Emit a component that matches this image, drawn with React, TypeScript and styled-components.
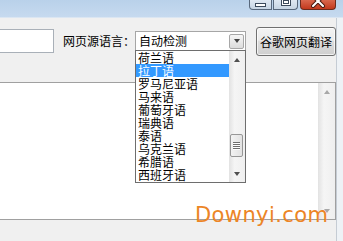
import React from "react";
import styled, { createGlobalStyle } from "styled-components";

const GlobalStyle = createGlobalStyle`
  html, body {
    margin: 0;
    padding: 0;
    background: #f0f0f0;
    overflow: hidden;
  }
  body {
    font-family: "Noto Sans CJK SC", "DejaVu Sans", sans-serif;
    font-size: 12px;
    color: #000;
  }
  * {
    box-sizing: border-box;
  }
`;

const Window = styled.div`
  position: relative;
  width: 343px;
  height: 241px;
  overflow: hidden;
  display: flex;
  flex-direction: column;
  background: #f0f0f0;
`;

const TitleBar = styled.div`
  flex: none;
  height: 18px;
  background: linear-gradient(#b9d1ea, #c6daef);
  border-bottom: 1px solid #dbe6f2;
  display: flex;
  justify-content: flex-end;
  align-items: flex-start;
  padding-right: 7px;
`;

const CaptionGroup = styled.div`
  display: flex;
  gap: 1px;
`;

const CaptionButton = styled.div<{ $w: number; $kind: "min" | "max" | "close" }>`
  position: relative;
  width: ${(p) => p.$w}px;
  height: 10px;
  border: 1px solid ${(p) => (p.$kind === "close" ? "#6b2b1c" : "#58687c")};
  border-top: none;
  background: ${(p) =>
    p.$kind === "close"
      ? "linear-gradient(#d9674d, #c2391d)"
      : "linear-gradient(#dfe8f2, #c7d5e4)"};
  border-radius: ${(p) =>
    p.$kind === "min" ? "0 0 0 4px" : p.$kind === "max" ? "0 0 4px 0" : "0 0 4px 4px"};
  margin-left: ${(p) => (p.$kind === "close" ? "2px" : "0")};
  display: flex;
  justify-content: center;
  overflow: hidden;
`;

const MinGlyph = styled.div`
  margin-top: 3px;
  width: 11px;
  height: 4px;
  background: #fff;
  border: 1px solid #3c4a5c;
`;

const MaxGlyph = styled.div`
  margin-top: -2px;
  width: 10px;
  height: 8px;
  background: #fff;
  border: 1px solid #3c4a5c;
  box-shadow: inset 0 0 0 1px #fff, inset 0 0 0 2px #3c4a5c;
`;

const Body = styled.div`
  flex: 1;
  display: flex;
  min-height: 0;
`;

const Main = styled.div`
  width: 336px;
  display: flex;
  flex-direction: column;
`;

const Frame = styled.div`
  flex: 1;
  border-left: 1px solid #c5ccd4;
  background: #eef2f6;
`;

const Toolbar = styled.div`
  flex: none;
  height: 46px;
  margin-bottom: 18px;
  display: flex;
  align-items: center;
`;

const UrlInput = styled.div`
  width: 54px;
  height: 24px;
  background: #fff;
  border: 1px solid #a9b0b8;
  border-left: none;
`;

const Label = styled.span`
  margin-left: 9px;
  font-size: 12px;
  line-height: 14px;
  white-space: nowrap;
`;

const Combo = styled.div`
  position: relative;
  width: 111px;
  height: 20px;
  background: #fff;
  border: 1px solid #a6a6a6;
  display: flex;
  align-items: center;
  padding-left: 3px;
  padding-right: 1px;
`;

const ComboText = styled.span`
  flex: 1;
  font-size: 12px;
  line-height: 14px;
`;

const ComboArrow = styled.div`
  width: 15px;
  height: 15px;
  border: 1px solid #a7a7a7;
  border-radius: 2px;
  background: linear-gradient(#f6f6f6, #dcdcdc);
  display: flex;
  align-items: center;
  justify-content: center;
`;

const Triangle = styled.div<{ $up?: boolean; $color?: string }>`
  width: 0;
  height: 0;
  border-left: 3.5px solid transparent;
  border-right: 3.5px solid transparent;
  ${(p) =>
    p.$up
      ? `border-bottom: 4px solid ${p.$color ?? "#505050"};`
      : `border-top: 4px solid ${p.$color ?? "#505050"};`}
`;

const DropList = styled.div`
  position: absolute;
  top: 18px;
  left: -1px;
  width: 111px;
  height: 133px;
  background: #fff;
  border: 1px solid #6e6e6e;
  display: flex;
  z-index: 5;
`;

const Items = styled.div`
  width: 93px;
  display: flex;
  flex-direction: column;
`;

const Item = styled.div<{ $selected?: boolean }>`
  height: 13px;
  line-height: 13px;
  font-size: 12px;
  padding-left: 2px;
  white-space: nowrap;
  background: ${(p) => (p.$selected ? "#3399ff" : "transparent")};
  color: ${(p) => (p.$selected ? "#fff" : "#000")};
`;

const ScrollBar = styled.div<{ $w: number }>`
  width: ${(p) => p.$w}px;
  height: 100%;
  display: flex;
  flex-direction: column;
  background: linear-gradient(to right, #e2e2e2, #f5f5f5 35%, #efefef);
`;

const ScrollArrow = styled.div`
  flex: none;
  height: 17px;
  display: flex;
  align-items: center;
  justify-content: center;
`;

const ScrollTrack = styled.div`
  flex: 1;
`;

const Thumb = styled.div`
  width: 13px;
  height: 23px;
  margin-left: 1px;
  border: 1px solid #979797;
  border-radius: 2px;
  background: linear-gradient(to right, #f3f3f3, #e2e2e2);
  display: flex;
  flex-direction: column;
  align-items: center;
  justify-content: center;
  gap: 1px;
`;

const Grip = styled.div`
  width: 7px;
  height: 1px;
  background: #6f6f6f;
  box-shadow: 0 1px 0 #fff;
`;

const TranslateButton = styled.div`
  margin-left: 10px;
  width: 80px;
  height: 29px;
  border: 1px solid #707070;
  border-radius: 3px;
  background: linear-gradient(#f3f3f3 0%, #ebebeb 45%, #dddddd 50%, #cfcfcf 100%);
  box-shadow: inset 0 0 0 1px rgba(255, 255, 255, 0.7);
  display: flex;
  align-items: center;
  justify-content: center;
  font-size: 12px;
  white-space: nowrap;
`;

const TextArea = styled.div`
  flex: none;
  height: 138px;
  background: #fff;
  border: 1px solid #a0a0a0;
  border-left: none;
  display: flex;
  justify-content: flex-end;
`;

const Watermark = styled.div`
  position: absolute;
  left: 195px;
  top: 203px;
  font-family: "DejaVu Sans", "Noto Sans", sans-serif;
  font-size: 21px;
  color: #ec8526;
  letter-spacing: 0.4px;
  white-space: nowrap;
`;

const languages = [
  "荷兰语",
  "拉丁语",
  "罗马尼亚语",
  "马来语",
  "葡萄牙语",
  "瑞典语",
  "泰语",
  "乌克兰语",
  "希腊语",
  "西班牙语",
];

const Scroller: React.FC<{ width: number; thumbTop?: number; arrowColor?: string }> = ({
  width,
  thumbTop,
  arrowColor,
}) => (
  <ScrollBar $w={width}>
    <ScrollArrow>
      <Triangle $up $color={arrowColor} />
    </ScrollArrow>
    <ScrollTrack>
      {thumbTop !== undefined && (
        <Thumb style={{ marginTop: thumbTop }}>
          <Grip />
          <Grip />
          <Grip />
          <Grip />
        </Thumb>
      )}
    </ScrollTrack>
    <ScrollArrow>
      <Triangle $color={arrowColor} />
    </ScrollArrow>
  </ScrollBar>
);

const CloseGlyph = () => (
  <svg width="14" height="8" viewBox="0 0 14 8" style={{ display: "block" }}>
    <path d="M2 -4 L12 6 M12 -4 L2 6" stroke="#4a1a10" strokeWidth="4" strokeLinecap="round" />
    <path d="M2 -4 L12 6 M12 -4 L2 6" stroke="#fff" strokeWidth="2" strokeLinecap="round" />
  </svg>
);

export default function App() {
  return (
    <Window>
      <GlobalStyle />
      <TitleBar>
        <CaptionGroup>
          <CaptionButton $w={23} $kind="min">
            <MinGlyph />
          </CaptionButton>
          <CaptionButton $w={25} $kind="max">
            <MaxGlyph />
          </CaptionButton>
        </CaptionGroup>
        <CaptionButton $w={36} $kind="close">
          <CloseGlyph />
        </CaptionButton>
      </TitleBar>
      <Body>
        <Main>
          <Toolbar>
            <UrlInput />
            <Label>网页源语言：</Label>
            <Combo>
              <ComboText>自动检测</ComboText>
              <ComboArrow>
                <Triangle $color="#444" />
              </ComboArrow>
              <DropList>
                <Items>
                  {languages.map((l) => (
                    <Item key={l} $selected={l === "拉丁语"}>
                      {l}
                    </Item>
                  ))}
                </Items>
                <Scroller width={16} thumbTop={66} />
              </DropList>
            </Combo>
            <TranslateButton>谷歌网页翻译</TranslateButton>
          </Toolbar>
          <TextArea>
            <Scroller width={17} arrowColor="#a8a8a8" />
          </TextArea>
        </Main>
        <Frame />
      </Body>
      <Watermark>Downyi.com</Watermark>
    </Window>
  );
}
